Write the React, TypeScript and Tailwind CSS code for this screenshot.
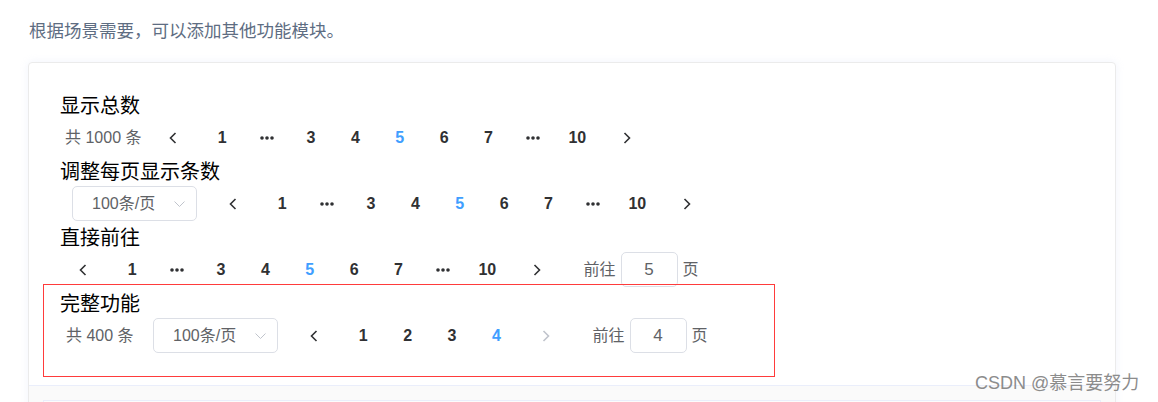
import React from 'react';

// Pager sketch: 4 demo blocks of an Element-style pagination at 125% zoom
type PagerItem = number | 'more';

const FONT = '"Liberation Sans", "Noto Sans CJK SC", sans-serif';

const ArrowLeft: React.FC<{ disabled?: boolean }> = ({ disabled }) => (
  <svg width="8" height="12" viewBox="0 0 8 12" className={disabled ? 'text-[#c0c4cc]' : 'text-[#303133]'}>
    <path d="M6.5 1 L1.5 6 L6.5 11" fill="none" stroke="currentColor" strokeWidth="1.6" />
  </svg>
);

const ArrowRight: React.FC<{ disabled?: boolean }> = ({ disabled }) => (
  <svg width="8" height="12" viewBox="0 0 8 12" className={disabled ? 'text-[#c0c4cc]' : 'text-[#303133]'}>
    <path d="M1.5 1 L6.5 6 L1.5 11" fill="none" stroke="currentColor" strokeWidth="1.6" />
  </svg>
);

const More: React.FC = () => (
  <svg width="14" height="4" viewBox="0 0 14 4" className="text-[#303133]">
    <circle cx="2" cy="2" r="1.8" fill="currentColor" />
    <circle cx="7" cy="2" r="1.8" fill="currentColor" />
    <circle cx="12" cy="2" r="1.8" fill="currentColor" />
  </svg>
);

const Pager: React.FC<{ items: PagerItem[]; active: number; nextDisabled?: boolean }> = ({ items, active, nextDisabled }) => (
  <>
    <div className="w-[44px] h-[35px] flex items-center justify-center">
      <ArrowLeft />
    </div>
    <ul className="ml-[5px] flex">
      {items.map((it, i) => (
        <li
          key={i}
          className={`w-[44.4px] h-[35px] flex items-center justify-center text-[16px] font-bold ${
            it === active ? 'text-[#409eff]' : 'text-[#303133]'
          }`}
        >
          {it === 'more' ? <More /> : it}
        </li>
      ))}
    </ul>
    <div className="ml-[5px] w-[44px] h-[35px] flex items-center justify-center">
      <ArrowRight disabled={nextDisabled} />
    </div>
  </>
);

const SizeSelect: React.FC = () => (
  <div className="w-[125px] h-[35px] border border-[#dcdfe6] rounded-[5px] flex items-center justify-between pl-[19px] pr-[11px] text-[16px] text-[#606266]">
    <span>100条/页</span>
    <svg width="11" height="6" viewBox="0 0 11 6" className="text-[#c0c4cc]">
      <path d="M0.5 0.5 L5.5 5.5 L10.5 0.5" fill="none" stroke="currentColor" strokeWidth="1" />
    </svg>
  </div>
);

const Jumper: React.FC<{ value: number }> = ({ value }) => (
  <div className="ml-[25px] flex items-center text-[16px] text-[#606266]">
    <span>前往</span>
    <div className="ml-[5px] w-[57px] h-[35px] border border-[#dcdfe6] rounded-[5px] flex items-center justify-center text-[17px]">
      {value}
    </div>
    <span className="ml-[5px]">页</span>
  </div>
);

const Block: React.FC<{ title: string; children: React.ReactNode; last?: boolean }> = ({ title, children, last }) => (
  <div className={last ? '' : 'mb-[3px]'}>
    <div className="h-[28px] leading-[28px] text-[20px] text-black">{title}</div>
    <div className="h-[35px] flex items-center">{children}</div>
  </div>
);

const full: PagerItem[] = [1, 'more', 3, 4, 5, 6, 7, 'more', 10];

export default function App() {
  return (
    <div className="relative w-[1158px] h-[402px] overflow-hidden bg-white pt-[18px]" style={{ fontFamily: FONT }}>
      <p className="ml-[29px] h-[26px] leading-[26px] text-[17.5px] text-[#5e6d82]">根据场景需要，可以添加其他功能模块。</p>

      <div className="mt-[18px] ml-[28px] w-[1088px] border border-[#ebebeb] rounded-[4px] shadow-[0_0_8px_0_rgba(232,237,250,0.6)]">
        <div className="pt-[29px] pl-[31px] pb-[32px]">
          <Block title="显示总数">
            <span className="ml-[5px] w-[86px] text-[16px] text-[#606266]">共 1000 条</span>
            <Pager items={full} active={5} />
          </Block>

          <Block title="调整每页显示条数">
            <div className="ml-[12px]">
              <SizeSelect />
            </div>
            <div className="ml-[14px] flex items-center">
              <Pager items={full} active={5} />
            </div>
          </Block>

          <Block title="直接前往">
            <div className="ml-[1px] flex items-center">
              <Pager items={full} active={5} />
            </div>
            <Jumper value={5} />
          </Block>

          <div className="relative">
            {/* red annotation box drawn over the last demo */}
            <div className="absolute -top-[6px] -left-[17px] w-[732px] h-[93px] border border-[#ff3b3b] pointer-events-none" />
            <Block title="完整功能" last>
              <span className="ml-[6px] w-[87px] text-[16px] text-[#606266]">共 400 条</span>
              <SizeSelect />
              <div className="ml-[14px] flex items-center">
                <Pager items={[1, 2, 3, 4]} active={4} nextDisabled />
              </div>
              <Jumper value={4} />
            </Block>
          </div>
        </div>

        <div className="border-t border-[#eaeefb] bg-[#fafafa] pt-[14px] px-[14px] h-[60px]">
          <div className="h-[40px] border border-[#eaeefb] bg-[#fcfcfc]" />
        </div>
      </div>

      <div className="absolute left-[975px] top-[372px] leading-[22px] text-[18px] text-[#8c8c8c] whitespace-nowrap">
        CSDN @慕言要努力
      </div>
    </div>
  );
}
